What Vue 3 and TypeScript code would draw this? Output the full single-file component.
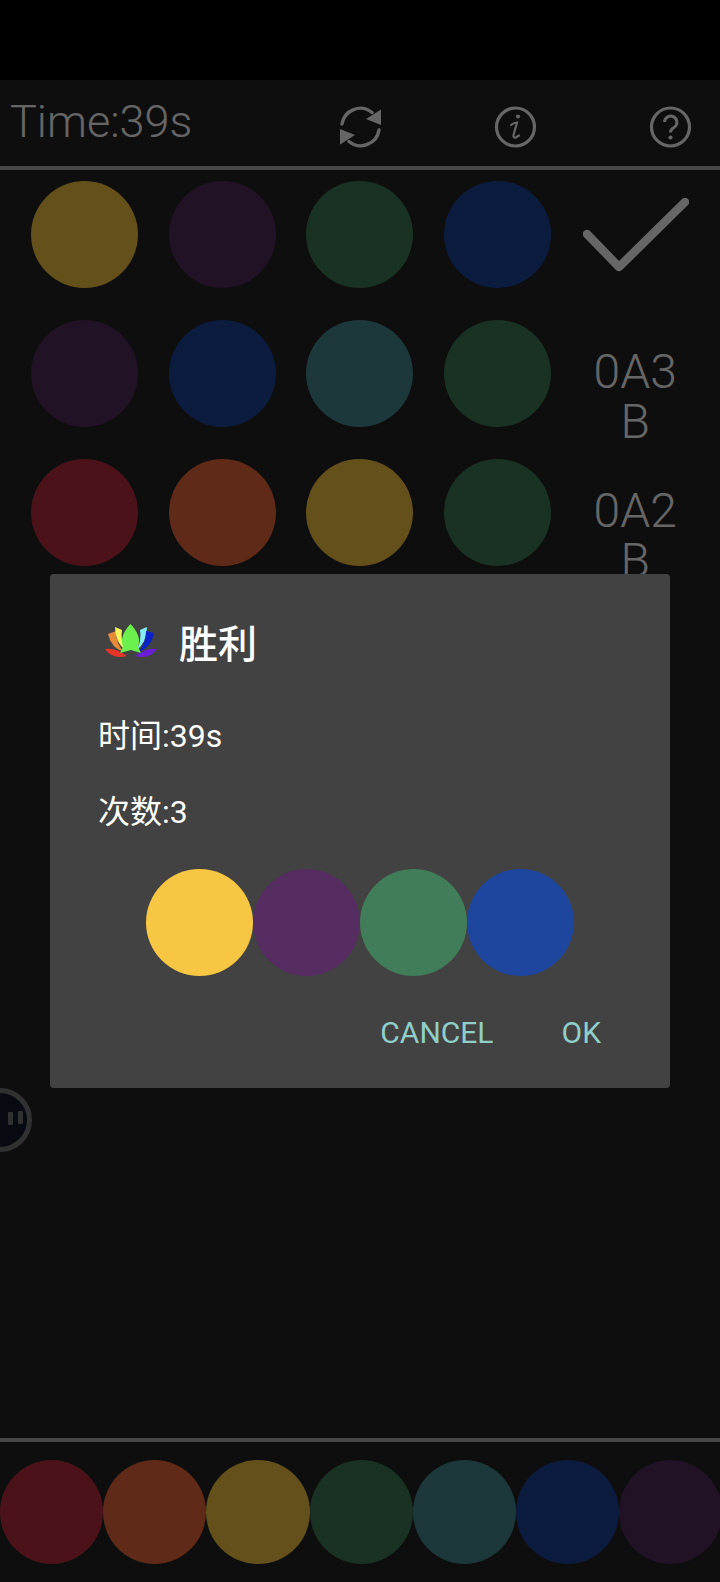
<script setup lang="ts">
const C: Record<string, string> = {
  red: '#bb3140', orange: '#f06a3c', yellow: '#f7c744', green: '#417d58',
  teal: '#488c92', blue: '#1f469e', purple: '#552d60',
}
const rows = [
  { pegs: ['yellow', 'purple', 'green', 'blue'], result: '' },
  { pegs: ['purple', 'blue', 'teal', 'green'], result: '0A3B' },
  { pegs: ['red', 'orange', 'yellow', 'green'], result: '0A2B' },
]
const palette = ['red', 'orange', 'yellow', 'green', 'teal', 'blue', 'purple']
const answer = ['yellow', 'purple', 'green', 'blue']
</script>

<template>
  <div class="page">
    <div class="status"></div>
    <header class="head">
      <span class="time">Time:39s</span>
      <div class="tools">
        <svg class="tool" viewBox="0 0 43 42" fill="none">
          <path d="M3 18A18.500 18.500 0 0 1 33 6.500" stroke="#fff" stroke-width="3.400" stroke-linecap="round" />
          <path d="M40 24A18.500 18.500 0 0 1 10 35.500" stroke="#fff" stroke-width="3.400" stroke-linecap="round" />
          <path d="M42 3.500V19L27 13Z" fill="#fff" />
          <path d="M1 38.500V23L16 29Z" fill="#fff" />
        </svg>
        <svg class="tool" viewBox="0 0 43 42" fill="none">
          <circle cx="21.500" cy="21" r="19" stroke="#fff" stroke-width="3.200" />
          <circle cx="24" cy="10.500" r="2.100" fill="#fff" />
          <path d="M17 19Q20 16.500 23 16.500L19.500 29Q19 32 22 31.500L25 29.500" stroke="#fff" stroke-width="2.200" stroke-linecap="round" />
        </svg>
        <svg class="tool" viewBox="0 0 43 42" fill="none">
          <circle cx="21.500" cy="21" r="19" stroke="#fff" stroke-width="3.200" />
          <path d="M15.500 16A6.200 6.200 0 1 1 25 21.500Q21.500 23.500 21.500 26.500" stroke="#fff" stroke-width="3" />
          <circle cx="21.500" cy="31.500" r="2.100" fill="#fff" />
        </svg>
      </div>
    </header>
    <div class="rule"></div>
    <main class="board">
      <div v-for="(row, i) in rows" :key="i" class="row">
        <span v-for="(p, j) in row.pegs" :key="j" class="peg" :style="{ background: C[p] }"></span>
        <svg v-if="!row.result" class="check" viewBox="0 0 106 74" fill="none">
          <path d="M4 36L36 69L102 4" stroke="#fff" stroke-width="8.500" stroke-linecap="round" stroke-linejoin="round" />
        </svg>
        <div v-else class="result">{{ row.result }}</div>
      </div>
    </main>
    <div class="rule"></div>
    <footer class="palette">
      <span v-for="p in palette" :key="p" class="swatch" :style="{ background: C[p] }"></span>
    </footer>

    <div class="ball"><i></i><i></i></div>
    <div class="scrim"></div>

    <section class="dialog">
      <div class="title">
        <svg class="logo" viewBox="0 0 52 34">
          <path d="M0 25Q10 23 22 32Q8 36 0 25Z" fill="#e8352a" />
          <path d="M3 10L11 7Q11 20 19 28Q6 24 3 10Z" fill="#e68a3a" />
          <path d="M10 3L17 6Q15 17 21 27Q10 18 10 3Z" fill="#f6f55a" />
          <path d="M42 3L35 6Q37 17 31 27Q42 18 42 3Z" fill="#86ecf4" />
          <path d="M49 9L41 7Q41 20 33 28Q46 24 49 9Z" fill="#0a22c8" />
          <path d="M52 25Q42 23 30 32Q44 36 52 25Z" fill="#6a1fd6" />
          <path d="M25.500 0Q37 12 33 23L36 29L26 26L15 29L18 23Q14 12 25.500 0Z" fill="#6cf04e" />
        </svg>
        <h2>胜利</h2>
      </div>
      <p class="line first">时间:39s</p>
      <p class="line">次数:3</p>
      <div class="answer">
        <span v-for="p in answer" :key="p" class="peg" :style="{ background: C[p] }"></span>
      </div>
      <div class="actions">
        <span>CANCEL</span>
        <span>OK</span>
      </div>
    </section>
  </div>
</template>

<style>
html, body { margin: 0; background: #000; }
</style>

<style scoped>
.page {
  position: relative;
  width: 720px;
  height: 1582px;
  display: flex;
  flex-direction: column;
  overflow: hidden;
  background: #232323;
  font-family: Roboto, "Noto Sans CJK SC", sans-serif;
}
.status { height: 80px; background: #000; flex: none; position: relative; z-index: 3; }
.head {
  height: 86px;
  flex: none;
  display: flex;
  align-items: center;
  justify-content: space-between;
  padding: 0 28px 0 10px;
}
.time { font-size: 45px; font-weight: 300; color: #fff; margin-top: -3px; }
.tools { display: flex; gap: 112px; margin-top: 7px; }
.tool { width: 43px; height: 42px; display: block; }
.rule { height: 4px; flex: none; background: #b4b4b4; }
.board {
  flex: 1;
  display: flex;
  flex-direction: column;
  gap: 32px;
  padding: 11px 16px 0;
}
.row { display: grid; grid-template-columns: repeat(5, 1fr); grid-template-rows: 107px; height: 107px; justify-items: center; align-items: center; }
.peg { width: 107px; height: 107px; border-radius: 50%; display: block; flex: none; }
.result {
  width: 90px;
  align-self: start;
  margin-top: 27px;
  text-align: center;
  font-size: 48px;
  font-weight: 300;
  line-height: 50px;
  color: #fff;
  word-break: break-all;
}
.check { width: 106px; height: 74px; display: block; margin-left: 2px; }
.palette { height: 140px; flex: none; display: flex; padding-top: 18px; box-sizing: border-box; }
.swatch { flex: none; width: 103.200px; height: 104px; border-radius: 50%; display: block; }
.ball {
  position: absolute;
  left: -32px;
  top: 1088px;
  width: 64px;
  height: 64px;
  box-sizing: border-box;
  border: 5px solid #7a7a7a;
  border-radius: 50%;
  background: #151b2c;
  display: flex;
  justify-content: flex-end;
  align-items: flex-start;
  gap: 5px;
  padding: 18px 4px 0 0;
}
.ball i { display: block; width: 5px; height: 13px; background: #7a7a7a; border-radius: 1px; }
.ball i:first-child { margin-top: 1px; }
.scrim { position: absolute; inset: 0; background: rgba(0, 0, 0, 0.6); z-index: 2; }
.dialog {
  position: absolute;
  left: 50px;
  top: 574px;
  width: 620px;
  height: 514px;
  box-sizing: border-box;
  padding: 41px 50px 0;
  background: #424242;
  border-radius: 4px;
  z-index: 4;
  color: #fff;
}
.title { display: flex; align-items: center; gap: 22px; height: 52px; }
.logo { width: 52px; height: 34px; margin-left: 5px; display: block; }
.title h2 { margin: 0; font-size: 39px; font-weight: 500; line-height: 52px; font-family: "Noto Sans CJK SC", sans-serif; }
.line { margin: 32px 0 0 -2px; font-size: 32px; line-height: 44px; font-family: Roboto, "Noto Sans CJK SC", sans-serif; font-weight: 400; }
.line.first { margin-top: 47px; }
.answer { display: flex; justify-content: center; margin-top: 35px; margin-left: -1px; }
.actions {
  display: flex;
  justify-content: flex-end;
  gap: 68px;
  margin-top: 39px;
  margin-right: 19px;
  font-size: 30px;
  line-height: 36px;
  color: #8fcfc8;
}
</style>
